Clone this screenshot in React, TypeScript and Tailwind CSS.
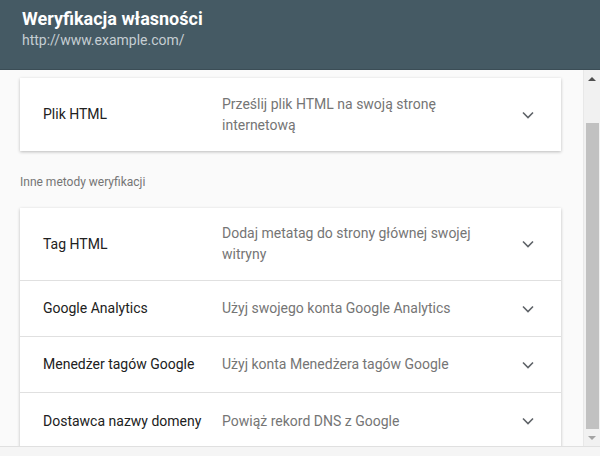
const methods = [
  { name: "Tag HTML", desc: "Dodaj metatag do strony głównej swojej witryny" },
  { name: "Google Analytics", desc: "Użyj swojego konta Google Analytics" },
  { name: "Menedżer tagów Google", desc: "Użyj konta Menedżera tagów Google" },
  { name: "Dostawca nazwy domeny", desc: "Powiąż rekord DNS z Google" },
];

function Chevron() {
  return (
    <svg width="12" height="8" viewBox="0 0 12 8" fill="none" className="text-[#5f6368]">
      <path d="M1 1.5l5 5 5-5" stroke="currentColor" strokeWidth="1.6" />
    </svg>
  );
}

function MethodRow({ name, desc, last }: { name: string; desc: string; last?: boolean }) {
  return (
    <div
      className={`flex min-h-[56px] items-center py-[15px] ${last ? "" : "border-b border-[#e0e0e0]"}`}
    >
      <div className="w-[202px] shrink-0 pl-[23px] text-[14px] text-[#212121]">{name}</div>
      <div className="w-[262px] shrink-0 text-[14px] leading-[21px] text-[#757575]">{desc}</div>
      <div className="flex flex-1 justify-end pr-[27px]">
        <Chevron />
      </div>
    </div>
  );
}

export default function App() {
  return (
    <div
      className="flex h-[456px] w-[600px] flex-col overflow-hidden bg-[#fafafa]"
      style={{ fontFamily: "Roboto, 'Liberation Sans', sans-serif" }}
    >
      <header className="h-[70px] shrink-0 border-b border-[#3b4d56] bg-[#455a64] px-[22px] pt-[7px]">
        <h1 className="text-[18px] font-bold leading-[24px] text-white">Weryfikacja własności</h1>
        <div className="text-[14px] leading-[18px] text-[#c5ced3]">http://www.example.com/</div>
      </header>

      <div className="flex min-h-0 flex-1">
        <main className="min-w-0 flex-1 overflow-hidden pl-[20px] pr-[22px] pt-[8px]">
          <div className="bg-white shadow-[0_1px_3px_rgba(0,0,0,0.25)]">
            <div className="flex h-[73px] items-center">
              <div className="w-[202px] shrink-0 pl-[23px] text-[14px] text-[#212121]">Plik HTML</div>
              <div className="w-[262px] shrink-0 text-[14px] leading-[21px] text-[#757575]">
                Prześlij plik HTML na swoją stronę internetową
              </div>
              <div className="flex flex-1 justify-end pr-[27px]">
                <Chevron />
              </div>
            </div>
          </div>

          <div className="pb-[18px] pt-[23px] text-[12px] leading-[16px] text-[#757575]">Inne metody weryfikacji</div>

          <div className="bg-white pb-[24px] shadow-[0_1px_3px_rgba(0,0,0,0.25)]">
            {methods.map((m, i) => (
              <MethodRow key={m.name} name={m.name} desc={m.desc} last={i === methods.length - 1} />
            ))}
          </div>
        </main>

        {/* fake scrollbar */}
        <div className="flex w-[17px] shrink-0 flex-col items-center border-l border-[#e8e8e8] bg-[#f1f1f1]">
          <div className="flex h-[17px] w-full items-center justify-center">
            <div className="h-0 w-0 border-x-[4px] border-b-[4px] border-x-transparent border-b-[#505050]" />
          </div>
          <div className="mt-[36px] w-[13px] flex-1 bg-[#c1c1c1]" />
          <div className="flex h-[17px] w-full items-center justify-center">
            <div className="h-0 w-0 border-x-[4px] border-t-[4px] border-x-transparent border-t-[#a3a3a3]" />
          </div>
        </div>
      </div>

      <footer className="h-[10px] shrink-0 border-t border-[#e0e0e0] bg-[#f5f5f5]" />
    </div>
  );
}
